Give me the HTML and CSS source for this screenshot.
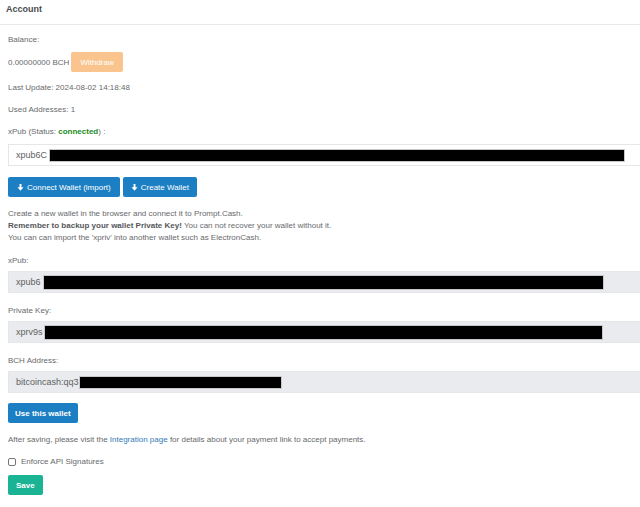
FILE: index.html
```html
<!DOCTYPE html>
<html lang="en">
<head>
    <meta charset="UTF-8">
    <title>Account</title>
    <link rel="stylesheet" href="styles.css">
</head>
<body>
    <div class="ibox">
        <div class="ibox-title">
            <h5>Account</h5>
        </div>

        <div class="ibox-content">
            <p class="line mb-7">Balance:</p>
            <div class="balance-row">
                <span>0.00000000 BCH</span>
                <button class="btn btn-warning" disabled>Withdraw</button>
            </div>

            <p class="line">Last Update: 2024-08-02 14:18:48</p>
            <p class="line">Used Addresses: 1</p>
            <p class="line mb-7">xPub (Status: <strong class="ok">connected</strong>) :</p>

            <div class="form-control white mb-11">xpub6C<span class="redact r1"></span></div>

            <div class="btn-row">
                <button class="btn btn-blue"><svg class="icon" viewBox="0 0 10 10"><path d="M3.6 0h2.8v4.6h2.9L5 9.6 0.7 4.6h2.9z"/></svg> Connect Wallet (import)</button>
                <button class="btn btn-blue"><svg class="icon" viewBox="0 0 10 10"><path d="M3.6 0h2.8v4.6h2.9L5 9.6 0.7 4.6h2.9z"/></svg> Create Wallet</button>
            </div>

            <p class="info">
                Create a new wallet in the browser and connect it to Prompt.Cash.<br>
                <strong>Remember to backup your wallet Private Key!</strong> You can not recover your wallet without it.<br>
                You can can import the 'xpriv' into another wallet such as ElectronCash.
            </p>

            <div class="form-group">
                <label>xPub:</label>
                <div class="form-control">xpub6<span class="redact r2"></span></div>
            </div>
            <div class="form-group">
                <label>Private Key:</label>
                <div class="form-control">xprv9s<span class="redact r3"></span></div>
            </div>
            <div class="form-group last">
                <label>BCH Address:</label>
                <div class="form-control">bitcoincash:qq3<span class="redact r4"></span></div>
            </div>

            <button class="btn btn-blue bold">Use this wallet</button>

            <p class="line after">After saving, please visit the <a href="#">Integration page</a> for details about your payment link to accept payments.</p>

            <label class="check line">
                <input type="checkbox"> Enforce API Signatures
            </label>

            <button class="btn btn-primary bold save">Save</button>
        </div>
    </div>
</body>
</html>
```

FILE: styles.css
```css
/* base */
body {
    margin: 0;
    font-family: 'Liberation Sans', Arial, sans-serif;
    font-size: 8px;
    color: #676a6c;
    background: #fff;
}

/* panel */
.ibox-title {
    box-sizing: border-box;
    height: 25px;
    padding: 4px 6px 0;
    border-bottom: 1px solid #e7eaec;
}
.ibox-title h5 {
    margin: 0;
    font-size: 9px;
    line-height: 10px;
    font-weight: bold;
    color: #4a4c4e;
}
.ibox-content {
    padding: 10px 0 0 8px; /* fields run to the right edge */
}

/* text rows */
.line {
    margin: 0 0 12px;
    line-height: 10px;
}
.mb-7 { margin-bottom: 7px; }
.mb-11 { margin-bottom: 11px; }
.ok {
    color: #1d8a24;
}
.info {
    margin: 0 0 12px;
    line-height: 12px;
}
.info strong {
    color: #55575a;
}
a {
    color: #337ab7;
    text-decoration: none;
}

.balance-row {
    display: flex;
    align-items: center;
    gap: 2px;
    margin-bottom: 11px;
}

/* buttons */
.btn {
    display: inline-flex;
    align-items: center;
    gap: 3px;
    height: 20px;
    padding: 0 9px;
    border: none;
    border-radius: 2px;
    font-family: inherit;
    font-size: 8px;
    color: #fff;
}
.btn.bold {
    font-weight: bold;
    padding: 0 7px;
}
.btn.save {
    padding: 0 8px;
}
.btn-warning { background: #f9c48d; }
.btn-blue { background: #1d7fc3; }
.btn-primary { background: #1ab394; }
.btn-row {
    display: flex;
    gap: 3px;
    margin-bottom: 11px;
}
.btn-row .btn + .btn {
    padding: 0 8px;
}
.icon {
    width: 7px;
    height: 7px;
    fill: #fff;
}

/* fields */
.form-control {
    box-sizing: border-box;
    display: flex;
    align-items: center;
    height: 22px;
    padding: 0 7px;
    border: 1px solid #e5e6e7;
    border-right: none;
    background: #e9ebee;
    font-size: 9px;
    color: #5f6163;
}
.form-control.white {
    background: #fff;
}
.form-group {
    margin-bottom: 13px;
}
.form-group.last {
    margin-bottom: 10px;
}
.form-group label {
    display: block;
    line-height: 10px;
    margin-bottom: 5px;
}

/* redaction bars */
.redact {
    display: inline-block;
    background: #000;
    border: 1px solid #c8c8c8;
    box-sizing: border-box;
}
.r1 { width: 576px; height: 13px; margin-left: 2px; }
.r2 { width: 561px; height: 15px; margin-left: 2px; }
.r3 { width: 559px; height: 15px; margin-left: 1px; }
.r4 { width: 203px; height: 13px; }

.after {
    margin-top: 12px;
}

.check {
    display: flex;
    align-items: center;
    gap: 5px;
    margin-bottom: 8px;
}
.check input {
    appearance: none;
    width: 8px;
    height: 8px;
    margin: 0;
    border: 1px solid #767676;
    border-radius: 2px;
}
```
